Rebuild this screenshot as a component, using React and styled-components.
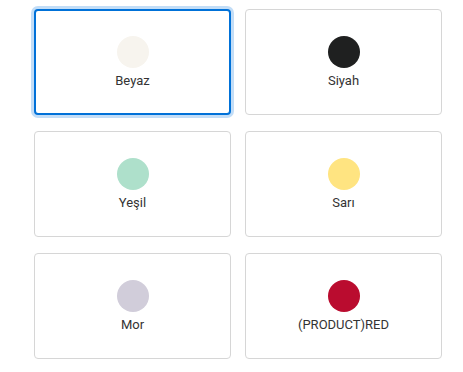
import React, { useState } from 'react'
import styled, { createGlobalStyle } from 'styled-components'

const Global = createGlobalStyle`
  body {
    margin: 0;
    background: #fff;
    font-family: Roboto, "Liberation Sans", sans-serif;
  }
`

const Grid = styled.div`
  display: grid;
  grid-template-columns: repeat(2, 197px);
  column-gap: 14px;
  row-gap: 16px;
  padding: 9px 0 0 34px;
`

const Card = styled.button`
  box-sizing: border-box;
  height: 106px;
  display: flex;
  flex-direction: column;
  align-items: center;
  justify-content: center;
  gap: 5px;
  background: #fff;
  border: ${p => (p.$selected ? '2px solid #0071d8' : '1px solid #d6d6d6')};
  border-radius: 4px;
  box-shadow: ${p => (p.$selected ? '0 0 0 3px #c2ddf7' : 'none')};
  padding: 0;
  cursor: pointer;
  font: inherit;
`

const Swatch = styled.span`
  width: 32px;
  height: 32px;
  border-radius: 50%;
  background: ${p => p.$color};
`

const Label = styled.span`
  font-size: 13px;
  line-height: 16px;
  color: #333;
`

const colors = [
  { name: 'Beyaz', color: '#f7f4ee' },
  { name: 'Siyah', color: '#1f2020' },
  { name: 'Yeşil', color: '#aee0cb' },
  { name: 'Sarı', color: '#ffe481' },
  { name: 'Mor', color: '#d1cdda' },
  { name: '(PRODUCT)RED', color: '#ba0c2f' },
]

const App = () => {
  const [selected, setSelected] = useState(0)
  return (
    <>
      <Global />
      <Grid>
        {colors.map((c, i) => (
          <Card key={c.name} $selected={i === selected} onClick={() => setSelected(i)}>
            <Swatch $color={c.color} />
            <Label>{c.name}</Label>
          </Card>
        ))}
      </Grid>
    </>
  )
}

export default App
